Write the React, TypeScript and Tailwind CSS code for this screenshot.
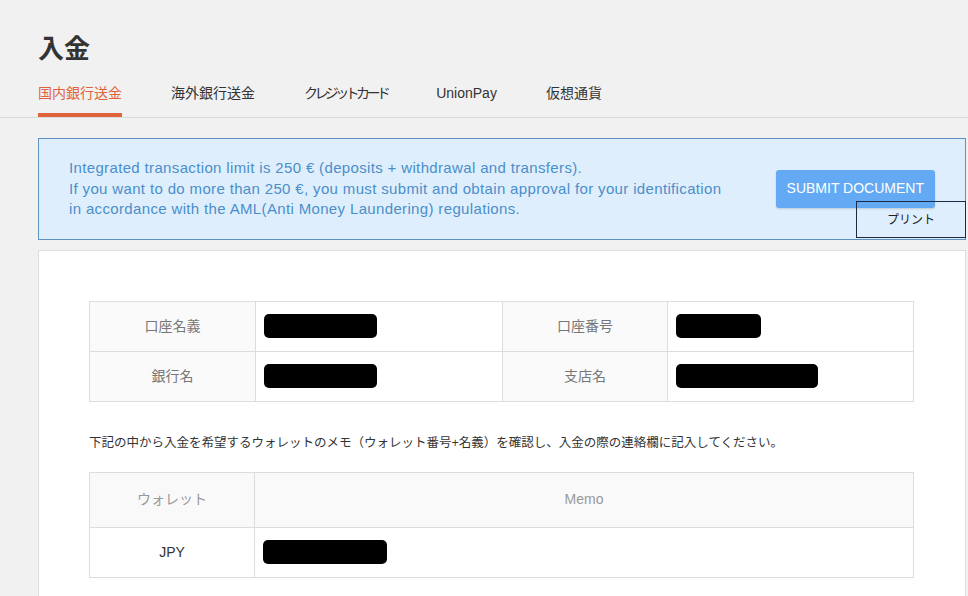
const font = "font-['Liberation_Sans','Noto_Sans_CJK_JP',sans-serif]";

const tabs = [
  { label: "国内銀行送金", cls: "" },
  { label: "海外銀行送金", cls: "" },
  { label: "クレジットカード", cls: "tracking-[-3.6px]" },
  { label: "UnionPay", cls: "" },
  { label: "仮想通貨", cls: "" },
];

function Redacted({ w }: { w: number }) {
  return <div className="h-6 rounded-[5px] bg-black" style={{ width: w }} />;
}

export default function App() {
  return (
    <div className={`min-h-[596px] w-[968px] overflow-hidden bg-[#f1f1f1] ${font}`}>
      <header className="border-b border-[#d9d9d9]">
        <h1 className="pl-[38px] pt-[32px] text-[26px] font-bold leading-[34px] text-[#333]">入金</h1>
        <nav className="mt-[13px] flex gap-[49px] pl-[38px]">
          {tabs.map((t, i) => (
            <div
              key={t.label}
              className={`pb-[10px] pt-[4px] text-[14px] leading-5 border-b-4 whitespace-nowrap ${t.cls} ${
                i === 0 ? "border-[#e0643b] text-[#e0643b]" : "border-transparent text-[#333]"
              }`}
            >
              {t.label}
            </div>
          ))}
        </nav>
      </header>

      <main className="ml-[38px] mr-[2px] pt-5">
        <div className="relative flex items-center justify-between border border-[#5f91c2] bg-[#dfeefc] py-[19px] pl-[30px] pr-[30px]">
          <p className="text-[15px] leading-[20.5px] tracking-[0.35px] text-[#4a8fca]">
            Integrated transaction limit is 250 € (deposits + withdrawal and transfers).
            <br />
            If you want to do more than 250 €, you must submit and obtain approval for your identification
            <br />
            in accordance with the AML(Anti Money Laundering) regulations.
          </p>
          <button className="h-[38px] rounded-[3px] bg-[#64a9f3] px-[11px] text-[14px] text-white shadow-[0_1px_2px_rgba(0,0,0,0.15)]">
            SUBMIT DOCUMENT
          </button>
          <div className="absolute right-[-1px] top-[62px] flex h-[37px] w-[110px] items-center justify-center border border-[#1d2a44] text-[12px] text-[#222]">
            プリント
          </div>
        </div>

        <section className="mt-[10px] border border-[#dddddd] bg-white px-[50px] pt-[50px] pb-[20px]">
          <table className="w-[825px] border-collapse text-[14px]">
            <tbody>
              <tr className="h-[50px]">
                <td className="w-[166px] border border-[#dddddd] bg-[#fafafa] text-center text-[#777]">口座名義</td>
                <td className="w-[247px] border border-[#dddddd] pl-2"><Redacted w={113} /></td>
                <td className="w-[165px] border border-[#dddddd] bg-[#fafafa] text-center text-[#777]">口座番号</td>
                <td className="border border-[#dddddd] pl-2"><Redacted w={85} /></td>
              </tr>
              <tr className="h-[50px]">
                <td className="border border-[#dddddd] bg-[#fafafa] text-center text-[#777]">銀行名</td>
                <td className="border border-[#dddddd] pl-2"><Redacted w={113} /></td>
                <td className="border border-[#dddddd] bg-[#fafafa] text-center text-[#777]">支店名</td>
                <td className="border border-[#dddddd] pl-2"><Redacted w={142} /></td>
              </tr>
            </tbody>
          </table>

          <p className="mt-[31px] text-[12.5px] leading-5 text-[#333]">
            下記の中から入金を希望するウォレットのメモ（ウォレット番号+名義）を確認し、入金の際の連絡欄に記入してください。
          </p>

          <table className="mt-[19px] w-[825px] border-collapse text-[14px]">
            <thead>
              <tr className="h-[55px] bg-[#f9f9f9]">
                <th className="w-[165px] border border-[#dddddd] font-normal text-[#999]">ウォレット</th>
                <th className="border border-[#dddddd] font-normal text-[#999]">Memo</th>
              </tr>
            </thead>
            <tbody>
              <tr className="h-[50px]">
                <td className="border border-[#dddddd] text-center text-[#333]">JPY</td>
                <td className="border border-[#dddddd] pl-2"><Redacted w={124} /></td>
              </tr>
            </tbody>
          </table>
        </section>
      </main>
    </div>
  );
}
